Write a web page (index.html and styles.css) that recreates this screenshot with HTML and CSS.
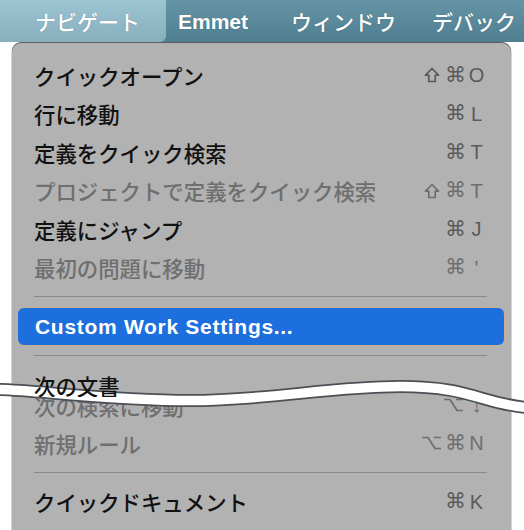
FILE: index.html
```html
<!DOCTYPE html>
<html lang="ja">
<head>
<meta charset="utf-8">
<title>ナビゲート menu</title>
<link rel="stylesheet" href="styles.css">
</head>
<body>
<div class="menubar">
  <div class="mb-item mb-active">ナビゲート</div>
  <div class="mb-item mb-emmet">Emmet</div>
  <div class="mb-item mb-win">ウィンドウ</div>
  <div class="mb-item mb-debug">デバック</div>
</div>

<div class="panel">
  <div class="row"><span class="label">クイックオープン</span><span class="sc"><svg class="ico shift" viewBox="0 0 16 16"><path d="M8 1.5 L14.5 8.2 H11.2 V14.5 H4.8 V8.2 H1.5 Z"/></svg><span class="cmd">⌘</span><span class="key">O</span></span></div>
  <div class="row"><span class="label">行に移動</span><span class="sc"><span class="cmd">⌘</span><span class="key">L</span></span></div>
  <div class="row"><span class="label">定義をクイック検索</span><span class="sc"><span class="cmd">⌘</span><span class="key">T</span></span></div>
  <div class="row disabled"><span class="label">プロジェクトで定義をクイック検索</span><span class="sc"><svg class="ico shift" viewBox="0 0 16 16"><path d="M8 1.5 L14.5 8.2 H11.2 V14.5 H4.8 V8.2 H1.5 Z"/></svg><span class="cmd">⌘</span><span class="key">T</span></span></div>
  <div class="row"><span class="label">定義にジャンプ</span><span class="sc"><span class="cmd">⌘</span><span class="key">J</span></span></div>
  <div class="row disabled"><span class="label">最初の問題に移動</span><span class="sc"><span class="cmd">⌘</span><span class="key">'</span></span></div>
  <div class="sep"></div>
  <div class="row hl"><span class="label latin">Custom Work Settings...</span></div>
  <div class="sep"></div>
  <div class="cut-top">
    <div class="row"><span class="label">次の文書</span></div>
  </div>
  <div class="cut-bottom">
    <div class="row disabled"><span class="label">次の検索に移動</span><span class="sc"><svg class="ico opt" viewBox="0 0 21 16"><path d="M1 2.5 H7 L14 13.5 H20 M13 2.5 H20"/></svg><span class="key">↓</span></span></div>
  </div>
  <div class="row disabled"><span class="label">新規ルール</span><span class="sc"><svg class="ico opt" viewBox="0 0 21 16"><path d="M1 2.5 H7 L14 13.5 H20 M13 2.5 H20"/></svg><span class="cmd">⌘</span><span class="key">N</span></span></div>
  <div class="sep"></div>
  <div class="row"><span class="label">クイックドキュメント</span><span class="sc"><span class="cmd">⌘</span><span class="key">K</span></span></div>
</div>

<svg class="wave" width="524" height="50" viewBox="0 370 524 50" aria-hidden="true">
  <path d="M-2,389.5 C30,389.5 110,400.5 190,400.5 S 330,386.5 400,386.5 S 480,403 526,407.5" fill="none" stroke="#4b5056" stroke-width="13"/>
  <path d="M-2,389.5 C30,389.5 110,400.5 190,400.5 S 330,386.5 400,386.5 S 480,403 526,407.5" fill="none" stroke="#ffffff" stroke-width="9.5"/>
</svg>
</body>
</html>
```

FILE: styles.css
```css
html, body {
  margin: 0;
  padding: 0;
  background: #ffffff;
}

body {
  width: 524px;
  height: 530px;
  overflow: hidden;
  position: relative;
  font-family: "Noto Sans CJK JP", "Liberation Sans", sans-serif;
}

.menubar {
  display: flex;
  align-items: stretch;
  height: 42px;
  background: linear-gradient(#6494a5, #4f7e8f);
  color: #ffffff;
  white-space: nowrap;
  overflow: hidden;
}

.mb-item {
  display: flex;
  align-items: center;
  font-size: 21px;
  font-weight: 500;
  line-height: 1;
  padding: 0 19px;
  text-shadow: 0 0 1px rgba(0,0,0,0.3);
}

.mb-active {
  padding: 0 26px 0 35px;
  width: 105px;
  background: linear-gradient(#9dc4d1, #87afbe);
  border-bottom-right-radius: 6px;
}

.mb-emmet {
  padding-left: 12px;
  padding-right: 24px;
  font-family: "Liberation Sans", sans-serif;
  font-weight: 700;
  font-size: 21px;
}

.mb-win {
  letter-spacing: 0;
  padding-right: 18px;
}

.mb-debug {
  padding-left: 18px;
}

.panel {
  margin: 1px 13px 0 12px;
  height: 487px;
  background: #b2b2b2;
  border-radius: 9px 9px 0 0;
  box-shadow: 0 -1px 0 #5c5c5c, 0 0 0 0.5px rgba(0,0,0,0.35);
  padding-top: 13px;
  box-sizing: border-box;
}

.row {
  display: flex;
  align-items: center;
  justify-content: space-between;
  height: 38.5px;
  padding: 0 25px 0 22px;
  box-sizing: border-box;
  color: #111111;
  white-space: nowrap;
}

.label {
  font-size: 21.4px;
  font-weight: 500;
  line-height: 1;
}

.disabled {
  color: #6f6f6f;
}

.sc {
  display: flex;
  align-items: center;
  color: #5a5a5a;
  font-family: "Liberation Sans", "DejaVu Sans", sans-serif;
  font-size: 20px;
  line-height: 1;
}

.disabled .sc {
  color: #6e6e6e;
}

.ico {
  fill: none;
  stroke: currentColor;
  stroke-width: 1.7;
  stroke-linejoin: round;
}

.shift {
  width: 16px;
  height: 16px;
  margin-right: 5px;
}

.opt {
  width: 21px;
  height: 16px;
  margin-right: 3px;
}

.cmd {
  font-family: "DejaVu Sans", sans-serif;
  font-size: 21px;
  margin-right: 1px;
}

.key {
  width: 19px;
  text-align: center;
}

.sep {
  height: 20px;
  margin: 0 24px 0 22px;
  background: linear-gradient(transparent 9.5px, #8a8a8a 9.5px, #8a8a8a 10.5px, transparent 10.5px);
}

.row.hl {
  height: 39px;
  margin: 0 6px 0 5px;
  padding-left: 17px;
  background: #1c6fdd;
  border: 1px solid #cfae8c;
  border-radius: 7px;
  color: #ffffff;
}

.latin {
  font-family: "Liberation Sans", sans-serif;
  font-weight: 700;
  font-size: 21px;
  letter-spacing: 0.7px;
}

.cut-top {
  height: 31px;
  overflow: hidden;
  position: relative;
  z-index: 2;
}

.cut-bottom {
  height: 27px;
  overflow: hidden;
}

.cut-bottom .row {
  margin-top: -11px;
}

.wave {
  position: absolute;
  left: 0;
  top: 370px;
  z-index: 1;
}
```
